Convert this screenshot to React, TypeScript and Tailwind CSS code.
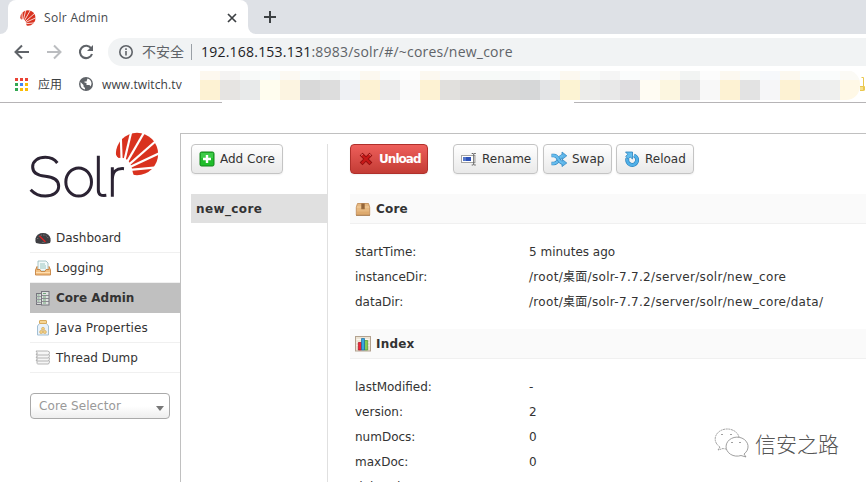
import React from 'react';

const CELLS: [string, string][] = [
  ['#fdf2d3', '#fdf8ef'], ['#e6e4e2', '#f4f3f2'], ['#e8eaea', '#f8faf9'], ['#fffdef', '#f9fcfb'], ['#fcf4e1', '#fcf9f2'],
  ['#d9d9d9', '#f9fcfb'], ['#dddddd', '#f7f9f8'], ['#eff1f4', '#fafcfc'], ['#fdf2d3', '#fcf8f0'], ['#ededed', '#fafcfc'],
  ['#fafafa', '#fdfdfd'], ['#fdf2d3', '#fcf8f0'], ['#e1e0dd', '#f9f9f8'], ['#dad9d8', '#f8f9f8'], ['#dad9d6', '#f7faf8'],
  ['#d9d9d8', '#f8f9f9'], ['#d6d7d8', '#f6f9f8'], ['#e3e4e6', '#fafbfb'], ['#fcf3d3', '#fcf8f0'], ['#ececea', '#f8faf9'],
  ['#e8e8e8', '#f5f5f5'], ['#dfdde0', '#fafcfc'], ['#fffcf3', '#fafafa'], ['#fcf6e0', '#fbfaf5'], ['#e2e2e2', '#f2f4f3'],
  ['#f8f8f8', '#fcfcfc'], ['#fdf2d3', '#fcf8f0'], ['#e3e3e3', '#f8faf9'], ['#f6f6f8', '#f6f8fb'], ['#fdf2d3', '#fcf8ef'],
  ['#ededed', '#f9fcfb'], ['#eeefee', '#fafcfc'], ['#fff8e6', '#fbfaf5'],
];

function Fan() {
  const ends = [[255, 48], [284, 8], [318, -4], [362, -6], [400, 24], [412, 64], [412, 110]];
  return (
    <g>
      <circle cx="333" cy="72" r="63.5" fill="#d9321f" />
      {ends.map(([x, y]) => (
        <path key={x + '-' + y} d={`M288 122L${x} ${y}`} stroke="#fff" strokeWidth="6.5" />
      ))}
      <path d="M262 72L278 84Q312 78 320 126L326 144H262Z" fill="#fff" />
    </g>
  );
}

function SolrLogo() {
  return (
    <svg className="block h-[72px] w-[136px]" viewBox="0 0 408 216" fill="none">
      <Fan />
      <g stroke="#2b2333" strokeWidth="9">
        <path d="M94 99C85 87 73 82 58 82C36 82 20 93 20 111C20 131 39 137 58 139C82 141 98 151 98 169C98 188 80 198 58 198C39 198 25 191 14 179" />
        <ellipse cx="158" cy="156" rx="38.5" ry="42" />
        <path d="M217 77V180C217 194 224 198 241 196" />
        <path d="M259 112V200M259 148C260 124 271 114 294 116" />
      </g>
    </svg>
  );
}

const svg = 'block h-4 w-4 shrink-0';

const GaugeIcon = () => (
  <svg className={svg} viewBox="0 0 16 16">
    <path d="M1 13Q0 12 .5 8.500Q2 3 8 3Q14 3 15.500 8.500Q16 12 15 13Q8 15 1 13Z" fill="#3e3e42" />
    <path d="M2.500 9Q4 5 8 5Q12 5 13.500 9" fill="none" stroke="#999" strokeWidth=".9" strokeDasharray="1 1.500" />
    <path d="M4.500 6L10.500 12" stroke="#e02020" strokeWidth="1.200" />
    <path d="M6.500 13Q8 10.500 10 13Z" fill="#666" />
  </svg>
);
const InboxIcon = () => (
  <svg className={svg} viewBox="0 0 16 16">
    <path d="M3 1H11L13 3V11H3Z" fill="#f4fafa" stroke="#93b6b8" strokeWidth=".8" />
    <path d="M5 4H10M5 6H11M5 8H11" stroke="#8fc0b8" strokeWidth=".9" />
    <path d="M.5 10L2 6.500V9.500H5L6 11.500H10L11 9.500H14V6.500L15.500 10V15H.5Z" fill="#f2bf80" stroke="#c68443" strokeWidth=".9" />
    <path d="M1 12.500H15" stroke="#ffdfb3" />
  </svg>
);
const ServersIcon = () => (
  <svg className={svg} viewBox="0 0 16 16">
    <rect x="1.500" y="3.500" width="5" height="11" fill="#d9dddb" stroke="#77767e" />
    <path d="M1 6.500h6M1 9.500h6M1 12.500h6" stroke="#8c8b93" strokeWidth=".8" />
    <path d="M2.500 5h2M2.500 8h2M2.500 11h2" stroke="#64a071" strokeWidth=".8" />
    <rect x="6.500" y="1.500" width="7.500" height="13.500" fill="#e0e3e1" stroke="#77767e" />
    <path d="M6 5.500h8M6 8.500h8M6 11.500h8" stroke="#77767e" strokeWidth=".8" />
    <path d="M8 3.500h3M8 7h3M8 10h3M8 13h3" stroke="#64a071" strokeWidth=".9" />
  </svg>
);
const JarIcon = () => (
  <svg className={svg} viewBox="0 0 16 16">
    <path d="M4.500 3.500H11.500L13.500 6V15H2.500V6Z" fill="#e9f2fa" stroke="#a2bfd4" />
    <rect x="4.500" y=".5" width="7" height="3" rx=".5" fill="#f5d596" stroke="#d8ab5c" />
    <g fill="#f2cf82" stroke="#d0a455" strokeWidth=".6"><circle cx="8" cy="8.800" r="1.500" /><circle cx="6.200" cy="12" r="1.600" /><circle cx="9.800" cy="12" r="1.600" /></g>
  </svg>
);
const StackIcon = () => (
  <svg className={svg} viewBox="0 0 16 16" fill="#f6f6f6" stroke="#a3a3a3" strokeWidth=".8">
    {[11.5, 8.5, 5.5, 2.5].map((y) => (
      <path key={y} d={`M1 ${y - 1.5}H12.500Q15 ${y - 1} 14.500 ${y + 0.5}L13.500 ${y + 2.5}H2.800Q1 ${y + 2} 2.300 ${y + 0.5}Z`} />
    ))}
  </svg>
);
const PlusIcon = () => (
  <svg className={svg} viewBox="0 0 16 16">
    <rect x="1" y="1" width="14" height="14" rx="1.500" fill="#20bd2b" stroke="#13841b" />
    <path d="M2 2H14V7H2Z" fill="#52d45b" opacity=".6" />
    <path d="M8 4V12M4 8H12" stroke="#fff" strokeWidth="2.400" />
  </svg>
);
const CrossIcon = () => (
  <svg className={svg} viewBox="0 0 16 16">
    <path d="M4.500 4.500L11.500 11.500M11.500 4.500L4.500 11.500" stroke="#8f1010" strokeWidth="4" strokeLinecap="square" />
    <path d="M4.500 4.500L11.500 11.500M11.500 4.500L4.500 11.500" stroke="#c81818" strokeWidth="2.300" strokeLinecap="square" />
    <path d="M3 4.300L4.800 3.500M11.200 3.500L13 4.300" stroke="#f08080" />
  </svg>
);
const RenameIcon = () => (
  <svg className={svg} viewBox="0 0 16 16">
    <rect x=".5" y="4.500" width="13.500" height="7" fill="#fff" stroke="#a2a2a2" />
    <rect x="2" y="6" width="8" height="4" fill="#2c51b8" /><rect x="2" y="6" width="3" height="4" fill="#5577c8" />
    <path d="M10.700 2.500H12.200L12.700 3L13.200 2.500H14.800M10.700 14H12.200L12.700 13.500L13.200 14H14.800M12.700 3V13.500" stroke="#666" fill="none" strokeWidth="1" />
  </svg>
);
const SwapIcon = () => (
  <svg className={svg} viewBox="0 0 16 16">
    <path d="M.5 12.500H3C8 12.500 7 5 12 5" fill="none" stroke="#2d82bd" strokeWidth="3.600" />
    <path d="M11 1L15.800 4.800L11 8.500Z" fill="#5cb4e8" stroke="#2d82bd" strokeWidth=".7" />
    <path d="M1 12.500H3C8 12.500 7 5 12 5" fill="none" stroke="#67bdee" strokeWidth="2.400" />
    <path d="M.5 4.500H3C8 4.500 7 12 12 12" fill="none" stroke="#2d82bd" strokeWidth="3.600" />
    <path d="M11 8.300L15.800 12L11 15.600Z" fill="#5cb4e8" stroke="#2d82bd" strokeWidth=".7" />
    <path d="M1 4.500H3C8 4.500 7 12 12 12" fill="none" stroke="#67bdee" strokeWidth="2.400" />
  </svg>
);
const ReloadIcon = () => (
  <svg className={svg} viewBox="0 0 16 16">
    <path d="M10 4.500A4.900 4.900 0 1 1 3.500 7.500" fill="none" stroke="#2c80ba" strokeWidth="4" />
    <path d="M10 4.500A4.900 4.900 0 1 1 3.500 7.500" fill="none" stroke="#50b0e8" strokeWidth="2.800" />
    <path d="M1.500 1H8.500V8L6.200 6L4.300 8L1.700 5.500L3.700 3.300Z" fill="#62bdee" stroke="#2c80ba" strokeWidth=".8" />
  </svg>
);
const BoxIcon = () => (
  <svg className={svg} viewBox="0 0 16 16">
    <path d="M2.500 2.500H13.500L14.700 6V14H1.300V6Z" fill="#e6b880" stroke="#bf8850" strokeWidth=".8" />
    <path d="M1.700 6H14.300" stroke="#f3cf9f" /><path d="M2 10.500H14V13.500H2Z" fill="#deaa6e" />
    <path d="M6.300 2.500H9.700V8.500L8.800 7.800L8 8.800L7.200 7.800L6.300 8.500Z" fill="#94663a" /><path d="M1 14.300H15" stroke="#a5774a" />
  </svg>
);
const ChartIcon = () => (
  <svg className={svg} viewBox="0 0 16 16">
    <rect x=".5" y=".5" width="15" height="14.500" fill="#ece4d5" stroke="#b3a28f" />
    <path d="M1.500 3.500H14.500M1.500 6.500H14.500M1.500 9.500H14.500" stroke="#faf6ee" />
    <path d="M3.300 6.500H6.500V14H3.300Z" fill="#ee2637" stroke="#a70f20" strokeWidth=".7" />
    <path d="M9.500 4.500H12.700V14H9.500Z" fill="#86cb52" stroke="#4d9230" strokeWidth=".7" />
    <path d="M6.500 2.500H9.500V14H6.500Z" fill="#38a5df" stroke="#176b9f" strokeWidth=".7" />
  </svg>
);

const chromeFont = "font-['Open_Sans','Noto_Sans_CJK_SC',sans-serif]";

function BrowserHeader() {
  return (
    <header className={`h-[103px] ${chromeFont}`}>
      <div className="flex h-[34px] bg-[#dee1e6]">
        <div className="flex w-2 items-end bg-white"><div className="h-full w-2 rounded-br-lg bg-[#dee1e6]" /></div>
        <div className="flex w-[240px] items-center rounded-t-lg bg-white pl-3 pr-[11px] pt-px">
          <svg className="h-4 w-4" viewBox="268 6 132 132"><Fan /></svg>
          <span className="ml-2 whitespace-nowrap text-[12px] tracking-[0.32px] text-[#45494d]">Solr Admin</span>
          <svg className="ml-auto h-[10px] w-[10px]" viewBox="0 0 10 10" stroke="#3c4043" strokeWidth="1.700"><path d="M1 1L9 9M9 1L1 9" /></svg>
        </div>
        <div className="w-2 bg-white"><div className="h-full rounded-bl-lg bg-[#dee1e6]" /></div>
        <svg className="ml-2 mt-[11px] h-3 w-3" viewBox="0 0 12 12" stroke="#3c4043" strokeWidth="2"><path d="M6 0V12M0 6H12" /></svg>
      </div>
      <div className="flex h-[36px] items-center pl-[14px]">
        <svg className="h-4 w-4" viewBox="0 0 16 16" fill="none" stroke="#5f6368" strokeWidth="2"><path d="M15 8H2.500M8 1.500L1.500 8L8 14.500" /></svg>
        <svg className="ml-4 h-4 w-4" viewBox="0 0 16 16" fill="none" stroke="#bbbdc0" strokeWidth="2"><path d="M1 8H13.500M8 1.500L14.500 8L8 14.500" /></svg>
        <svg className="ml-4 h-4 w-4" viewBox="0 0 16 16" fill="none" stroke="#5f6368" strokeWidth="2.100"><path d="M13.300 4.500A6.200 6.200 0 1 0 14 10" /><path d="M15 1V7H9Z" fill="#5f6368" stroke="none" /></svg>
        <div className="ml-[14px] flex h-7 flex-1 items-center rounded-l-full bg-[#f1f3f4] pl-[11px]">
          <svg className="h-[14px] w-[14px]" viewBox="0 0 14 14" fill="none" stroke="#5f6368" strokeWidth="1.600"><circle cx="7" cy="7" r="6.200" /><path d="M7 6V10.500M7 3.300V4.900" /></svg>
          <span className="ml-[9px] w-[42px] whitespace-nowrap text-[14px] leading-5 text-[#5f6368]">不安全</span>
          <i className="ml-[7px] h-4 w-px bg-[#9aa0a6]" />
          <span className="ml-[9px] whitespace-nowrap text-[14px] leading-5 tracking-[0.22px] text-[#5f6368]"><span className="text-[#202124]">192.168.153.131</span>:8983/solr/#/~cores/new_core</span>
        </div>
      </div>
      <div className="flex h-[33px] items-start">
        <div className="flex h-[28px] w-[200px] items-center pl-[15px]">
          <svg className="h-[13px] w-[13px]" viewBox="0 0 13 13">
            {['#ea4335', '#ea4335', '#ea4335', '#34a853', '#4285f4', '#fbbc05', '#34a853', '#fbbc05', '#fbbc05'].map((c, i) => (
              <rect key={i} x={(i % 3) * 5} y={Math.floor(i / 3) * 5} width="3" height="3" fill={c} />
            ))}
          </svg>
          <span className="ml-[10px] w-6 whitespace-nowrap pt-0.5 text-[12px] text-[#3c4043]">应用</span>
          <svg className="ml-[17px] h-[14px] w-[14px]" viewBox="0 0 14 14"><circle cx="7" cy="7" r="7" fill="#5f6368" /><path d="M1.500 5L4.500 8V9.500L6 11V12.500Q1.500 11.500 1.500 7ZM8.500 1.600Q12.500 3 12.500 7L11.500 9.500L10.500 8H7.500V6L5.500 5.500V4.500H7.500Z" fill="#fff" /></svg>
          <span className="ml-[9px] whitespace-nowrap pt-0.5 text-[12px] tracking-[0.1px] text-[#3c4043]">www.twitch.tv</span>
        </div>
        <div className="flex h-[30px] overflow-hidden rounded-r-[14px] pt-[1px]">
          {CELLS.map(([c, light], i) => (
            <div key={i} className="w-5"><div className="h-[9px]" style={{ background: light }} /><div className="h-5" style={{ background: c }} /></div>
          ))}
        </div>
        <svg className="mt-[7px] h-[14px] w-[5px]" viewBox="0 0 5 14" fill="none" stroke="#eac84e"><path d="M0 9H4V14H0Z" fill="#f6df8e" stroke="none" /><path d="M1.500 .5H3.500V13.500H0M0 9.500H4.500V13.500" /></svg>
      </div>
    </header>
  );
}

const NAV = [
  { label: 'Dashboard', Icon: GaugeIcon, track: '' },
  { label: 'Logging', Icon: InboxIcon, track: '' },
  { label: 'Core Admin', Icon: ServersIcon, active: true, track: '' },
  { label: 'Java Properties', Icon: JarIcon, track: 'tracking-[0.14px]' },
  { label: 'Thread Dump', Icon: StackIcon, track: '' },
];

function Sidebar() {
  return (
    <aside className="w-[180px] shrink-0 pt-[27px]">
      <div className="pl-[26px]"><SolrLogo /></div>
      <nav className="ml-[30px] mt-[21px]">
        {NAV.map(({ label, Icon, active, track }) => (
          <div key={label} className={`flex h-[30px] items-center border-b pl-[5px] ${active ? 'border-[#c0c0c0] bg-[#c0c0c0] font-bold' : 'border-[#f0f0f0]'}`}>
            <Icon /><span className={`ml-[5px] whitespace-nowrap ${track}`}>{label}</span>
          </div>
        ))}
      </nav>
      <div className="ml-[30px] mt-5 flex h-[26px] w-[140px] items-center justify-between rounded-[4px] border border-[#aaa] bg-linear-to-b from-white from-50% to-[#eee] pl-2 pr-[5px] text-[#999]">
        <span className="tracking-[0.08px]">Core Selector</span>
        <i className="mt-1 h-0 w-0 border-x-[4.5px] border-t-[5px] border-x-transparent border-t-[#777]" />
      </div>
    </aside>
  );
}

function Button({ Icon, label, className }: { Icon: React.FC; label: string; className: string }) {
  return (
    <button className={`flex h-[30px] shrink-0 items-center whitespace-nowrap rounded-[4px] border pl-[7px] shadow-[0_1px_2px_rgba(0,0,0,0.06)] ${className}`}>
      <Icon /><span className="ml-[5px]">{label}</span>
    </button>
  );
}
const plain = 'border-[#c4c4c4] bg-linear-to-b from-white to-[#e9e9e9]';

function Section({ title, Icon, rows }: { title: string; Icon: React.FC; rows: string[][] }) {
  return (
    <section className="h-[135px]">
      <h2 className="flex h-[30px] items-center border-b border-[#f0f0f0] bg-[#fafafa] pl-[5px] font-bold"><Icon /><span className="ml-[5px] tracking-[0.2px]">{title}</span></h2>
      <dl className="pt-[15px]">
        {rows.map(([k, v]) => (
          <div key={k} className="flex h-[25px] items-center whitespace-nowrap pl-[5px]">
            <dt className="w-[174px]">{k}:</dt><dd className={v.startsWith('/') ? 'tracking-[0.31px]' : ''}>{v}</dd>
          </div>
        ))}
      </dl>
    </section>
  );
}

export default function App() {
  return (
    <div className="relative h-[482px] w-[866px] overflow-hidden bg-white">
      <BrowserHeader />
      <div className="absolute left-0 top-[102px] flex w-full justify-between"><i className="h-px w-[222px] bg-[#b6b4b6]" /><i className="h-px w-[292px] bg-[#b6b4b6]" /></div>
      <div className="flex h-[379px] font-['DejaVu_Sans','Noto_Sans_CJK_SC',sans-serif] text-[12px] leading-[18px] text-[#333]">
        <Sidebar />
        <main className="mt-[30px] flex h-[400px] flex-1 border-l border-t border-[#c0c0c0] pl-[10px] pt-[10px]">
          <div className="w-[137px] shrink-0 border-r border-[#e0e0e0]">
            <Button Icon={PlusIcon} label="Add Core" className={`w-[92px] ${plain}`} />
            <div className="mt-5 flex h-[29px] items-center bg-[#e0e0e0] pl-[5px] font-bold tracking-[0.38px]">new_core</div>
          </div>
          <div className="ml-[22px] flex-1">
            <div className="mb-5 flex">
              <Button Icon={CrossIcon} label="Unload" className="mr-[25px] w-[78px] border-[#b0302b] bg-linear-to-b from-[#ee5f5b] to-[#c43c35] font-bold tracking-[-0.95px] text-white" />
              <Button Icon={RenameIcon} label="Rename" className={`mr-[5px] w-[85px] ${plain}`} />
              <Button Icon={SwapIcon} label="Swap" className={`mr-[4px] w-[69px] ${plain}`} />
              <Button Icon={ReloadIcon} label="Reload" className={`w-[78px] ${plain}`} />
            </div>
            <Section title="Core" Icon={BoxIcon} rows={[['startTime', '5 minutes ago'], ['instanceDir', '/root/桌面/solr-7.7.2/server/solr/new_core'], ['dataDir', '/root/桌面/solr-7.7.2/server/solr/new_core/data/']]} />
            <Section title="Index" Icon={ChartIcon} rows={[['lastModified', '-'], ['version', '2'], ['numDocs', '0'], ['maxDoc', '0'], ['deletedDocs', '']]} />
          </div>
        </main>
      </div>
      <div className="absolute left-[713px] top-[427px] flex items-center whitespace-nowrap font-['Noto_Sans_CJK_SC',sans-serif]">
        <svg className="h-[32px] w-[36px]" viewBox="0 0 36 32" fill="#fff" stroke="#888" strokeWidth=".8">
          <path d="M7 20L5 23L10 21.500Q12 22 14 22A12 10 0 1 0 7 20Z" strokeDasharray="2 .6" />
          <path d="M31 27L33 30L28 28.500A11 9.500 0 1 1 31 27Z" />
          <path d="M8 8Q9 6 10 8M17 8Q18 6 19 8M18 16Q19 14 20 16M26 16Q27 14 28 16" fill="none" />
        </svg>
        <span className="ml-[6px] text-[21px] font-light leading-8 text-[#555]">信安之路</span>
      </div>
    </div>
  );
}
